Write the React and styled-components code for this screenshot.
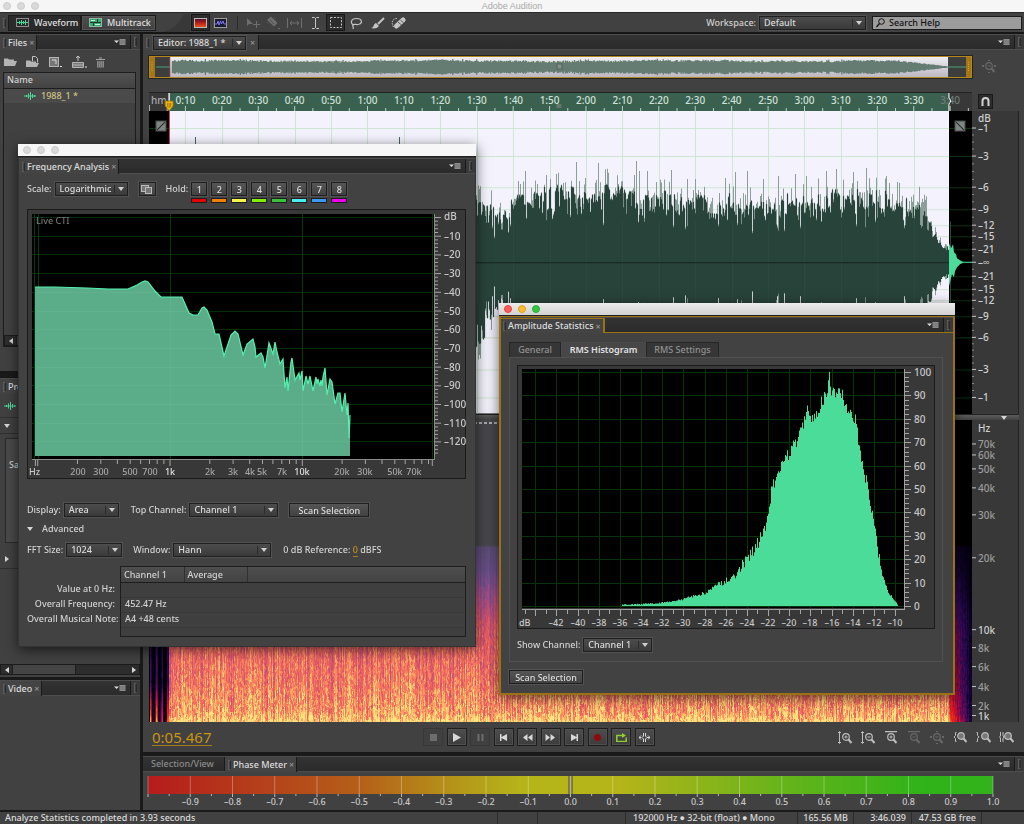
import React, { useEffect, useRef } from 'react';
import styled, { createGlobalStyle, css } from 'styled-components';

const GlobalStyle = createGlobalStyle`
  * {
    box-sizing: border-box;
  }

  body {
    margin: 0;
    background: #1a1a1a;
    color: #d2d2d2;
    font-family: 'Noto Sans', 'Open Sans', sans-serif;
    font-size: 9px;
    font-weight: 500;
    line-height: 12px;
    cursor: default;
  }

  button, input, select {
    font: inherit;
    color: inherit;
    margin: 0;
    padding: 0;
  }

  svg {
    display: block;
  }
`;

/* ---------- shell ---------- */

const Desktop = styled.div`
  position: relative;
  min-height: 100vh;
  display: flex;
  flex-direction: column;
  overflow: hidden;
`;

const TitleBar = styled.header`
  flex: none;
  height: 12px;
  display: flex;
  align-items: center;
  justify-content: center;
  position: relative;
  background: #f6f6f6;
  color: #a9a9a9;
  font-family: 'Liberation Sans', sans-serif;
  font-weight: 400;
`;

const Lights = styled.div`
  position: absolute;
  left: ${(p) => p.$left || 4}px;
  top: 50%;
  margin-top: -4px;
  display: flex;
  gap: 6px;
`;

const Light = styled.span`
  width: 8px;
  height: 8px;
  border-radius: 50%;
  background: ${(p) => p.$color || '#dadada'};
  border: 1px solid ${(p) => p.$edge || '#cdcdcd'};
`;

const Toolbar = styled.nav`
  flex: none;
  height: 22px;
  display: flex;
  align-items: center;
  border-top: 1px solid #2b2b2b;
  border-bottom: 2px solid #161616;
  background: #414141;
`;

const ModeButton = styled.button`
  height: 16px;
  width: ${(p) => p.$width}px;
  padding-left: 7px;
  display: flex;
  align-items: center;
  gap: 5px;
  border: 1px solid #1c1c1c;
  background: ${(p) => (p.$active ? '#2a2a2a' : 'linear-gradient(#4e4e4e, #404040)')};
  box-shadow: 0 0 0 1px ${(p) => (p.$active ? 'transparent' : '#555')} inset;
  color: #e0e0e0;
`;

const Slant = styled.svg`
  margin: 0 1px 0 8px;
`;

const ToolButton = styled.button`
  width: ${(p) => p.$width || 19}px;
  height: 17px;
  display: flex;
  align-items: center;
  justify-content: center;
  border: 1px solid ${(p) => (p.$pressed ? '#181818' : 'transparent')};
  background: ${(p) => (p.$pressed ? '#2c2c2c' : 'none')};
  color: ${(p) => (p.$dim ? '#6e6e6e' : '#c4c4c4')};
`;

const Divider = styled.span`
  width: 1px;
  height: 14px;
  margin: 0 5px 0 6px;
  background: #2a2a2a;
`;

const Spacer = styled.span`
  flex: 1;
`;

const SearchBox = styled.label`
  display: flex;
  align-items: center;
  gap: 4px;
  width: 150px;
  height: 14px;
  margin: 0 2px 0 6px;
  padding-left: 3px;
  border: 1px solid #1d1d1d;
  background: #9c9c9c;
  color: #111;
`;

const SearchInput = styled.input`
  flex: 1;
  min-width: 0;
  height: 12px;
  border: 0;
  background: none;
  outline: none;

  &::placeholder {
    color: #111;
    opacity: 1;
  }
`;

const Workbench = styled.main`
  flex: 1;
  display: grid;
  grid-template-columns: 140px 1fr;
  gap: 3px;
`;

const Column = styled.div`
  display: flex;
  flex-direction: column;
  min-width: 0;
  gap: ${(p) => p.$gap}px;
`;

const Panel = styled.section`
  display: flex;
  flex-direction: column;
  min-width: 0;
  flex: ${(p) => (p.$height ? 'none' : 1)};
  height: ${(p) => (p.$height ? `${p.$height}px` : 'auto')};
  margin-top: ${(p) => p.$pull || 0}px;
  background: #414141;
  overflow: hidden;
`;

const Header = styled.div`
  flex: none;
  height: 16px;
  display: flex;
  align-items: stretch;
  background: linear-gradient(#333, #2b2b2b);
  border-top: 1px solid #4c4c4c;
  border-bottom: 1px solid ${(p) => (p.$focus ? '#9a7115' : '#4d4d4d')};
`;

const Tab = styled.div`
  display: flex;
  align-items: center;
  gap: 2px;
  padding: 0 2px 0 ${(p) => (p.$idle ? 8 : 3)}px;
  width: ${(p) => (p.$width ? `${p.$width}px` : 'auto')};
  white-space: nowrap;
  color: ${(p) => (p.$idle ? '#8c8c8c' : '#dcdcdc')};
  background: ${(p) => (p.$idle ? 'none' : '#444')};
  border-right: 1px solid #1a1a1a;
  margin-bottom: ${(p) => (p.$idle ? 0 : -1)}px;

  ${(p) =>
    p.$focus &&
    css`
      padding-left: 2px;
      border-right: 2px solid #9a7115;
      border-top: 1px solid #9a7115;
    `}
`;

const Grip = styled.span`
  width: 3px;
  height: 10px;
  border: 1px solid #5c5c5c;
  border-right-color: #2a2a2a;
`;

const EndGrip = styled.span`
  width: 10px;
  display: flex;
  align-items: center;
  justify-content: center;
  border-left: 1px solid #1a1a1a;
  background: #3a3a3a;
`;

const Close = styled.button`
  border: 0;
  background: none;
  color: #9a9a9a;
  line-height: 9px;
`;

const MenuButton = styled.button`
  border: 0;
  background: none;
  margin-right: 4px;
  display: flex;
  align-items: center;
`;

const MenuIcon = () => (
  <svg width="12" height="8" viewBox="0 0 12 8">
    <path d="M0 2.500h5L2.500 5z" fill="#ddd" />
    <rect x="5.500" y="1" width="6" height="6" fill="#8b8b8b" />
    <path d="M6 3h5M6 5h5" stroke="#666" strokeWidth=".6" />
  </svg>
);

const PanelMenu = () => (
  <>
    <MenuButton aria-label="Panel menu">
      <MenuIcon />
    </MenuButton>
    <EndGrip>
      <Grip />
    </EndGrip>
  </>
);

/* ---------- controls ---------- */

const SelectWrap = styled.span`
  position: relative;
  display: inline-flex;
  width: ${(p) => p.$width}px;
  height: 14px;
  border: 1px solid #1f1f1f;
  background: linear-gradient(#4c4c4c, #3a3a3a);
  box-shadow: 0 0 0 1px #525252;
`;

const NativeSelect = styled.select`
  appearance: none;
  width: 100%;
  border: 0;
  outline: none;
  padding-left: 4px;
  line-height: 12px;
  background: none;
  color: #dcdcdc;

  option {
    background: #3a3a3a;
  }
`;

const Caret = styled.svg`
  position: absolute;
  right: 0;
  top: 0;
  pointer-events: none;
`;

const Select = ({ id, width, options, label }) => (
  <SelectWrap $width={width}>
    <NativeSelect id={id} aria-label={label} defaultValue={options[0]}>
      {options.map((o) => (
        <option key={o}>{o}</option>
      ))}
    </NativeSelect>
    <Caret width="13" height="12" viewBox="0 0 13 12">
      <path d="M.5 2v8" stroke="#2a2a2a" />
      <path d="M4 4h6L7 8z" fill="#d0d0d0" />
    </Caret>
  </SelectWrap>
);

const PushButton = styled.button`
  width: ${(p) => p.$width}px;
  height: 14px;
  line-height: 11px;
  margin-left: ${(p) => p.$left || 0}px;
  border: 1px solid #1f1f1f;
  background: linear-gradient(#555, #424242);
  box-shadow: 0 0 0 1px #525252;
  color: #dcdcdc;
`;

const CopyButton = styled(PushButton)`
  display: flex;
  align-items: center;
  justify-content: center;
`;

const Row = styled.div`
  display: flex;
  align-items: center;
  gap: ${(p) => p.$gap || 3}px;
  margin-top: ${(p) => p.$top || 0}px;
`;

const Label = styled.label`
  white-space: nowrap;
  margin-left: ${(p) => p.$left || 0}px;
`;

/* ---------- left column ---------- */

const FileTools = styled.div`
  display: flex;
  align-items: center;
  gap: 9px;
  height: 22px;
  padding: 2px 4px 0;
`;

const FileIconButton = styled.button`
  border: 0;
  background: none;
`;

const FileList = styled.div`
  flex: 1;
  margin: 0 4px 24px 3px;
  display: flex;
  flex-direction: column;
  border: 1px solid #1d1d1d;
`;

const FileTable = styled.table`
  width: 100%;
  border-collapse: collapse;
  text-align: left;

  th {
    height: 15px;
    padding: 0 3px;
    font-weight: 500;
    background: linear-gradient(#525252, #434343);
    border-bottom: 1px solid #1d1d1d;
  }

  td {
    height: 15px;
    padding: 0 0 0 20px;
    background: #4a4a4a;
    color: #d3c283;
  }
`;

const FileName = styled.span`
  display: flex;
  align-items: center;
  gap: 5px;
`;

const ScrollTrack = styled.div`
  display: flex;
  align-items: center;
  justify-content: space-between;
  height: 11px;
  margin: ${(p) => p.$margin || '0'};
  background: #2d2d2d;
  border: 1px solid #1c1c1c;
`;

const ScrollThumb = styled.span`
  flex: none;
  width: 64px;
  height: 9px;
  margin-right: auto;
  background: #454545;
  border: 1px solid #1e1e1e;
  border-width: 0 1px;
`;

const ScrollArrow = styled.button`
  width: 11px;
  border: 0;
  background: none;
  display: flex;
  justify-content: center;
`;

const Arrow = ({ dir }) => (
  <svg width="6" height="6" viewBox="0 0 6 6">
    <path
      d={{ left: 'M5 0v6L1 3z', right: 'M1 0v6l4-3z', down: 'M0 1h6L3 5z' }[dir]}
      fill="#d6d6d6"
    />
  </svg>
);

const Scrollbar = ({ margin }) => (
  <ScrollTrack $margin={margin}>
    <ScrollArrow aria-label="Scroll left">
      <Arrow dir="left" />
    </ScrollArrow>
    <ScrollThumb />
    <ScrollArrow aria-label="Scroll right">
      <Arrow dir="right" />
    </ScrollArrow>
  </ScrollTrack>
);

const PropertyBar = styled.div`
  display: flex;
  align-items: center;
  height: ${(p) => p.$height}px;
  padding-left: 4px;
  border-bottom: 1px solid #303030;
`;

const PropertyBox = styled.div`
  height: 105px;
  margin: 4px 4px 6px 5px;
  padding: 20px 3px;
  border: 1px solid #2a2a2a;
  background: #4a4a4a;
`;

const WaveGlyph = () => (
  <svg width="12" height="8" viewBox="0 0 12 8">
    <path
      d="M0 4h12M2.500 3v2M4.500 1.500v5M6.500 0v8M8.500 2v4M10.500 3v2"
      stroke="#4bd795"
      fill="none"
    />
  </svg>
);

/* ---------- editor ---------- */

const EditorTab = styled.div`
  display: flex;
  align-items: center;
  gap: 4px;
  padding: 0 3px 0 3px;
  background: #444;
  border-right: 1px solid #1a1a1a;
  margin-bottom: -1px;
`;

const EditorBody = styled.div`
  flex: 1;
  display: grid;
  grid-template-columns: 1fr 47px;
  grid-template-rows: 22px 14px 19px 1fr 6px 1fr;
  padding: 6px 5px 0 6px;
`;

const Overview = styled.div`
  border: 1px solid #b4881e;
  background: #3d3d3d;
  outline: 1px solid #242424;
`;

const Cell = styled.div`
  grid-column: ${(p) => p.$col};
  grid-row: ${(p) => p.$row};
  min-width: 0;
  min-height: 0;
  background: ${(p) => p.$bg || 'none'};
  padding-left: ${(p) => p.$indent || 0}px;
  position: relative;
  display: flex;
  align-items: center;
`;

const Fill = styled.svg`
  width: 100%;
  height: 100%;
`;

const SnapButton = styled.button`
  width: 15px;
  height: 15px;
  display: flex;
  align-items: center;
  justify-content: center;
  border: 1px solid #1a1a1a;
  background: #2c2c2c;
`;

const Splitter = styled.div`
  grid-column: 1 / 3;
  grid-row: 5;
  background: linear-gradient(#5c5c5c, #424242);
  border-top: 1px solid #222;
  display: flex;
  justify-content: flex-end;
  padding-right: 12px;
`;

const SpectrumCanvas = styled.canvas`
  position: absolute;
  inset: 0;
  width: 100%;
  height: 100%;
`;

const Transport = styled.div`
  flex: none;
  height: 30px;
  display: grid;
  grid-template-columns: 280px 232px 1fr;
  align-items: center;
  padding: 0 10px 0 0;
`;

const TimeCode = styled.button`
  justify-self: start;
  margin-left: 9px;
  border: 0;
  border-bottom: 1px solid #a67c1c;
  background: none;
  color: #c99314;
  font-size: 15px;
  font-weight: 400;
  line-height: 16px;
`;

const TransportButtons = styled.div`
  display: flex;
  justify-content: space-between;
`;

const TransportButton = styled.button`
  width: 20px;
  height: 18px;
  display: flex;
  align-items: center;
  justify-content: center;
  border: 1px solid ${(p) => (p.$dim ? '#383838' : '#1e1e1e')};
  background: ${(p) => (p.$dim ? '#404040' : 'linear-gradient(#4d4d4d, #3c3c3c)')};
  box-shadow: 0 0 0 1px ${(p) => (p.$dim ? 'transparent' : '#505050')} inset;
  color: ${(p) => (p.$dim ? '#6d6d6d' : '#d8d8d8')};
`;

const ZoomButtons = styled.div`
  justify-self: end;
  display: flex;
  gap: 8px;
`;

const ZoomButton = styled.button`
  border: 0;
  background: none;
  color: ${(p) => (p.$dim ? '#686868' : '#bdbdbd')};
`;

const PhaseBody = styled.div`
  flex: 1;
  padding: 4px 31px 0 5px;
`;

const StatusBar = styled.footer`
  flex: none;
  height: 14px;
  display: flex;
  align-items: stretch;
  border-top: 2px solid #1a1a1a;
  background: #414141;
  color: #dcdcdc;
`;

const StatusText = styled.span`
  flex: 1;
  padding-left: 5px;
`;

const StatusCell = styled.span`
  width: ${(p) => p.$width}px;
  padding: 0 ${(p) => (p.$left ? 0 : 5)}px 0 ${(p) => (p.$left ? 7 : 0)}px;
  text-align: ${(p) => (p.$left ? 'left' : 'right')};
  white-space: nowrap;
  border-left: 1px solid #2c2c2c;
`;

/* ---------- floating windows ---------- */

const FloatingWindow = styled.section`
  position: absolute;
  left: ${(p) => p.$left}px;
  top: ${(p) => p.$top}px;
  width: ${(p) => p.$width}px;
  background: #424242;
  box-shadow: 0 3px 12px rgba(0, 0, 0, 0.6);
`;

const WindowBar = styled.div`
  position: relative;
  height: 13px;
  background: ${(p) => (p.$active ? 'linear-gradient(#ececec, #d2d2d2)' : '#f7f7f7')};
  border-bottom: 1px solid #222;
`;

const WindowFrame = styled.div`
  border: ${(p) => (p.$focus ? '1px solid #9a7115' : '1px solid #333')};
  border-width: ${(p) => (p.$focus ? '1px 2px 2px' : '1px')};
`;

const FrequencyBody = styled.div`
  padding: 8px 9px 9px 8px;
`;

const HoldRow = styled(Row)`
  height: 21px;
  align-items: flex-start;
  line-height: 14px;
`;

const HoldGroup = styled.div`
  display: flex;
  gap: 4px;
`;

const Hold = styled.div`
  display: flex;
  flex-direction: column;
  gap: 2px;
`;

const HoldColor = styled.span`
  height: 5px;
  border: 1px solid #1e1e1e;
  background: ${(p) => p.$color};
`;

const ChartFrame = styled.div`
  margin-top: ${(p) => p.$top}px;
  border: 1px solid #1b1b1b;
  background: #383838;
`;

const Disclosure = styled.button`
  display: flex;
  align-items: center;
  gap: 9px;
  margin-top: 6px;
  border: 0;
  background: none;
`;

const Accent = styled.a`
  color: #c99314;
  text-decoration: none;
  border-bottom: 1px solid #a67c1c;
`;

const Results = styled.div`
  display: grid;
  grid-template-columns: 88px 1fr;
  gap: 5px;
  margin-top: 9px;
`;

const ResultLabels = styled.div`
  padding-top: 15px;
  text-align: right;
  line-height: 15px;
  white-space: nowrap;
`;

const ResultBox = styled.div`
  height: 71px;
  border: 1px solid #1d1d1d;
  background: #3f3f3f;
`;

const ResultTable = styled.table`
  width: 100%;
  border-collapse: collapse;
  table-layout: fixed;
  text-align: left;
  line-height: 11px;

  th {
    height: 15px;
    padding: 0 0 0 3px;
    font-weight: 500;
    background: linear-gradient(#4e4e4e, #434343);
    border-bottom: 1px solid #1d1d1d;
  }

  th + th {
    border-left: 1px solid #303030;
  }

  td {
    height: 15px;
    padding: 0 0 2px 4px;
    border-bottom: 1px solid #383838;
  }
`;

const Col = styled.col`
  width: ${(p) => p.$width}px;
`;

const StatsBody = styled.div`
  padding: 9px 10px 9px 8px;
`;

const StatsTabs = styled.div`
  display: flex;
`;

const StatsTab = styled.button`
  height: 15px;
  width: ${(p) => p.$width}px;
  border: 1px solid ${(p) => (p.$active ? '#4a4a4a' : '#262626')};
  border-bottom: 0;
  background: ${(p) => (p.$active ? '#474747' : '#363636')};
  color: ${(p) => (p.$active ? '#e2e2e2' : '#929292')};
  font-weight: ${(p) => (p.$active ? 600 : 500)};
`;

const StatsPane = styled.div`
  border: 1px solid #505050;
  padding: 7px 7px 9px;
  height: 305px;
  margin-bottom: 8px;
`;

/* ---------- data ---------- */

const noise = (seed) => {
  let s = seed;
  return () => {
    s = (s * 1664525 + 1013904223) % 4294967296;
    return s / 4294967296;
  };
};

const lerp = (pts, x) => {
  for (let i = 1; i < pts.length; i += 1) {
    if (x <= pts[i][0]) {
      const [x0, y0] = pts[i - 1];
      const [x1, y1] = pts[i];
      return y0 + ((x - x0) / (x1 - x0)) * (y1 - y0);
    }
  }
  return pts[pts.length - 1][1];
};

const DURATION = 226;
const SEL_START = 2.45;
const SEL_END = 97.2;

/* x and half height of the tall peaks and the deep gaps of the track */
const PEAKS = {
  376: 91, 397: 87, 407: 88, 427: 100, 449: 99, 487: 101, 490: 91, 498: 91,
  522: 92, 538: 83, 546: 83, 576: 84, 586: 90, 598: 91, 614: 83, 629: 86, 646: 88, 657: 86,
  677: 91, 687: 93, 704: 90, 717: 94, 737: 86, 748: 80, 777: 66,
};
const GAPS = {
  343: 34, 345: 24, 349: 38, 361: 36, 397: 42, 421: 45, 454: 37, 524: 35, 536: 33, 538: 36,
  569: 36, 588: 37, 603: 29, 628: 34, 635: 31, 651: 34, 667: 42, 707: 36, 726: 40, 755: 34,
};

const trackPaths = () => {
  const r = noise(77);
  const body = [];
  const tips = [];
  let run = 0;
  for (let x = 20; x < 800; x += 1) {
    const fade = x > 764 ? 1 - ((x - 764) / 36) * 0.76 : 1;
    const base = lerp(
      [[20, 56], [325, 62], [345, 42], [370, 56], [400, 62], [460, 64], [520, 60], [560, 56], [620, 54], [700, 62], [764, 54], [800, 50]],
      x
    );
    if (r() > 0.55) run = (r() - 0.5) * 22;
    let h = base + run + (r() - 0.5) * 8 - (r() > 0.9 ? 14 : 0);
    let tip = h + (r() > 0.5 ? r() * 20 : 1);
    if (GAPS[x]) {
      h = GAPS[x];
      tip = h + 2;
    }
    if (PEAKS[x]) tip = PEAKS[x];
    h *= fade;
    tip *= x > 777 ? fade : 1;
    const low = x < 336 ? 1.35 : 1;
    body.push(`M${x}.5 ${(151 - h).toFixed(1)}V${(151 + h * low).toFixed(1)}`);
    tips.push(`M${x}.5 ${(151 - tip).toFixed(1)}V${(151 + tip * low * 0.94).toFixed(1)}`);
  }
  return { body: body.join(''), tips: tips.join('') };
};

const overviewPath = () => {
  const r = noise(5);
  let d = '';
  for (let x = 22; x < 800; x += 1) {
    const fade = x > 745 ? 1 - (x - 745) / 60 : 1;
    const swell = 0.8 + Math.sin(x / 37) * 0.5 + Math.sin(x / 11) * 0.3;
    const h = (4.2 + swell + r() * 1.8 + (r() > 0.92 ? 1 : 0)) * fade;
    d += `M${x}.5 ${(10 - h).toFixed(1)}V${(10 + h).toFixed(1)}`;
  }
  return d;
};

const TRACK = trackPaths();
const OVERVIEW = overviewPath();

const DB_LINES = [
  ['–1', 17], ['–3', 45], ['–6', 76], ['–9', 98], ['–12', 114], ['–15', 125], ['–21', 138], ['–∞', 151],
  ['–21', 165], ['–15', 178], ['–12', 189], ['–9', 205], ['–6', 226], ['–3', 258], ['–1', 286],
];

const HZ_LINES = [
  ['Hz', 8, true], ['70k', 24], ['60k', 35], ['50k', 49], ['40k', 68], ['30k', 95], ['20k', 138],
  ['10k', 210, true], ['8k', 228], ['6k', 247], ['4k', 267], ['2k', 286], ['1k', 296, true],
];

const HOLDS = ['#e60000', '#f08000', '#f6f64a', '#80f000', '#38c438', '#48eef0', '#3a98f4', '#ee00ee'];

/* ---------- icons ---------- */

const icon = (w, h, children) => (
  <svg width={w} height={h} viewBox={`0 0 ${w} ${h}`} fill="none" stroke="currentColor">
    {children}
  </svg>
);

const WaveModeIcon = () =>
  icon(13, 9, <>
    <rect x=".5" y=".5" width="12" height="8" stroke="#8d8d8d" />
    <path d="M1 4.500h11M3.500 3v3M5.500 2v5M7.500 3v3M9.500 2v5" stroke="#4bd795" />
  </>);

const MultiModeIcon = () =>
  icon(13, 9, <>
    <rect x=".5" y=".5" width="12" height="8" stroke="#8fb8a3" fill="#38ab73" />
    <path d="M1 4.500h11M8.500 1v3M4.500 5v3" stroke="#23382e" />
    <path d="M2 2.500h4M6 6.500h5" stroke="#c9f2dd" />
  </>);

const SpectralIcon = () =>
  icon(13, 10, <>
    <defs>
      <linearGradient id="spectral" x1="0" y1="0" x2="0" y2="1">
        <stop offset="0" stopColor="#4a0b2c" />
        <stop offset=".5" stopColor="#b8201a" />
        <stop offset="1" stopColor="#ee5a1e" />
      </linearGradient>
    </defs>
    <rect x=".5" y=".5" width="12" height="9" stroke="#b9b9b9" fill="url(#spectral)" />
  </>);

const PitchIcon = () =>
  icon(13, 10, <>
    <rect x=".5" y=".5" width="12" height="9" stroke="#9b9b9b" fill="#1b1b30" />
    <path d="M1 6h2l1-3 1 4 1.500-4 1 3 1.500-3 1 3h2" stroke="#7d78f0" />
  </>);

const MoveIcon = () => icon(14, 12, <><path d="M1 1v8l2-2h4z" fill="currentColor" stroke="none" /><path d="M10.500 4v7M7 7.500h7" /></>);
const RazorIcon = () => icon(14, 13, <><path d="M1 4l4-3.500L11.500 7 8 10.500z" fill="currentColor" stroke="none" /><path d="M1 6l2 2M8 1l2 2M4 4l4 4" stroke="#505050" /><path d="M12 12.500h2" /></>);
const SlipIcon = () => icon(15, 10, <path d="M.5 0v10M14.500 0v10M3 5h9M5 3L3 5l2 2M10 3l2 2-2 2" />);
const BeamIcon = () => icon(7, 12, <path d="M0 .5h2.500l1 1 1-1H7M3.500 1v10M0 11.500h2.500l1-1 1 1H7" />);
const MarqueeIcon = () => icon(12, 11, <rect x=".5" y=".5" width="11" height="10" strokeDasharray="2 1.400" />);
const LassoIcon = () => icon(13, 12, <path d="M4 8C0 7 .5 1.500 6.500 1.500S13 6.500 8 7.500C6 8 4 6.500 3 8s1 1.500 0 4" strokeWidth="1.200" />);
const BrushIcon = () => icon(14, 12, <><path d="M13 1L7 7" strokeWidth="2" /><path d="M0 11c3 0 2-4 5-5l3 3c-2 2.500-5 3-8 2z" fill="currentColor" stroke="none" /></>);
const HealIcon = () => icon(16, 12, <><path d="M5.500 9L12 3" strokeWidth="5" strokeLinecap="round" /><path d="M2.500 10C-.5 5 2 1.500 6 1.500" strokeDasharray="1.500 1" /><path d="M7 5l3.500 3M9.500 3l3 3" stroke="#5c5c5c" /></>);

const FolderIcon = () => icon(13, 10, <path d="M0 9V1.500h4l1 1h5V4h3l-2 5z" fill="#b4b4b4" stroke="none" />);
const ImportIcon = () => icon(14, 12, <><path d="M0 11V4.500h4l1 1h5V7h3l-2 4z" fill="#b4b4b4" stroke="none" /><path d="M6.500 5V.5h3l2 2v4" stroke="#c4c4c4" /></>);
const NewFileIcon = () => icon(14, 12, <><rect x=".5" y="1.500" width="9" height="9" fill="#777" stroke="#b4b4b4" /><path d="M3 4h4v4" stroke="#ddd" /><path d="M11 10.500h2" stroke="#ddd" /></>);
const InsertIcon = () => icon(15, 12, <><path d="M.5 6.500h11v5H.5zM1 9h10" fill="#777" stroke="#b4b4b4" /><path d="M6 5V0M4 2l2-2 2 2" stroke="#c8c8c8" /><path d="M13 11h2" stroke="#ddd" /></>);
const TrashIcon = () => icon(9, 11, <><path d="M1 4h7v6.500H1z" fill="#8a8a8a" stroke="none" /><path d="M0 2.500h9M3 1h3" stroke="#a4a4a4" /><path d="M2.500 4v6M4.500 4v6M6.500 4v6" stroke="#6a6a6a" /></>);

const SearchIcon = () => icon(9, 10, <><circle cx="5.500" cy="3.500" r="2.800" /><path d="M3.500 5.500L.5 9" strokeWidth="1.200" /></>);
const MagnetIcon = () => icon(9, 9, <path d="M1.500 9V4a3 3 0 016 0v5" strokeWidth="2" />);
const CopyIcon = () =>
  icon(12, 9, <>
    <rect x=".5" y=".5" width="7" height="6" fill="#777" stroke="#bbb" />
    <rect x="4.500" y="2.500" width="6" height="6" fill="#777" stroke="#bbb" />
  </>);

const Lens = ({ x, y, sign }) => (
  <>
    <circle cx={x} cy={y} r="3.300" strokeWidth="1.200" fill={sign ? 'none' : '#777'} />
    <path d={`M${x + 2.5} ${y + 2.5}l3 3.500`} strokeWidth="2" />
    {sign && <path d={`M${x - 1.5} ${y}h3${sign === '+' ? `M${x} ${y - 1.5}v3` : ''}`} />}
  </>
);

const ZOOMS = [
  ['Zoom in amplitude', <><path d="M1.500 1v11M0 2l1.500-1.500L3 2M0 11l1.500 1.500L3 11" /><Lens x={8} y={6} sign="+" /></>],
  ['Zoom out amplitude', <><path d="M1.500 1v11M0 2l1.500-1.500L3 2M0 11l1.500 1.500L3 11" /><Lens x={8} y={6} sign="-" /></>],
  ['Zoom in time', <><path d="M1 .5h12" strokeWidth="1.500" /><Lens x={7} y={6} sign="+" /></>],
  ['Zoom out time', <><path d="M1 .5h12" strokeWidth="1.500" /><Lens x={7} y={6} sign="-" /></>, true],
  ['Zoom out full', <><path d="M0 6h2M12 6h2M7 0v1M7 12v1" strokeWidth="2" /><Lens x={7} y={6} sign="-" /></>, true],
  ['Zoom in at in point', <><path d="M3.500 1.500h-1v3L1 6l1.500 1.500v3h1" /><Lens x={8} y={5} /></>],
  ['Zoom in at out point', <><path d="M.5 1.500h1v3L3 6 1.500 7.500v3h-1" /><Lens x={9} y={5} /></>],
  ['Zoom to selection', <><path d="M1.500 1v4L.5 6l1 1v4M4 1v4l1 1-1 1v4" /><Lens x={9} y={5} /></>],
];

const TRANSPORT = [
  ['Stop', <path d="M2 1h7v7H2z" fill="currentColor" stroke="none" />, true],
  ['Play', <path d="M2 0l8 4.500L2 9z" fill="currentColor" stroke="none" />],
  ['Pause', <path d="M3.500 1v7M7.500 1v7" strokeWidth="2" />, true],
  ['Go to start', <path d="M2 1h1.500v3L9 1v7L3.500 5v3H2z" fill="currentColor" stroke="none" />],
  ['Rewind', <path d="M5.500 1v7L1 4.500zM10.500 1v7L6 4.500z" fill="currentColor" stroke="none" />],
  ['Fast forward', <path d="M.5 1v7L5 4.500zM5.500 1v7L10 4.500z" fill="currentColor" stroke="none" />],
  ['Go to end', <path d="M9 1H7.500v3L2 1v7l5.500-3v3H9z" fill="currentColor" stroke="none" />],
  ['Record', <circle cx="5.500" cy="4.500" r="3.500" fill="#8e0b0b" stroke="none" />],
  ['Loop', <><path d="M3 2.500H.8v6h9.400v-4M3 2.500h4" stroke="#8fcf2c" strokeWidth="1.500" /><path d="M6 0l4 2.500L6 5z" fill="#8fcf2c" stroke="none" /></>],
  ['Skip selection', <path d="M4.500 0v3L3 4.500 4.500 6v3M6.500 0v3L8 4.500 6.500 6v3M0 4.500h2M8 4.500h3M2 2.500L0 4.500l2 2M9 2.500l2 2-2 2" />],
];

/* ---------- spectrogram ---------- */

const PALETTE = [
  [0, 0, 0], [14, 4, 40], [50, 10, 90], [130, 10, 80], [205, 15, 40], [235, 50, 25], [250, 130, 30], [255, 220, 70],
];

const shade = (v) => {
  const t = Math.max(0, Math.min(0.999, v)) * (PALETTE.length - 1);
  const i = Math.floor(t);
  const f = t - i;
  return PALETTE[i].map((c, k) => c + (PALETTE[i + 1][k] - c) * f);
};

const SPECTRUM = [
  [0, 0], [125, 0], [127, 0.2], [150, 0.28], [175, 0.42], [205, 0.6], [235, 0.68], [265, 0.74], [294, 0.84], [303, 0.98],
];

const Spectrogram = () => {
  const ref = useRef(null);

  useEffect(() => {
    const ctx = ref.current.getContext('2d');
    const { width, height } = ref.current;
    const img = ctx.createImageData(width, height);
    const r = noise(41);
    const selFrom = 20;
    const selTo = 800;
    for (let x = 0; x < width; x += 1) {
      const streak = (r() - 0.5) * 0.24 + Math.sin(x / 5) * 0.03;
      const selected = x >= selFrom && x < selTo;
      let speck = 0;
      for (let y = 0; y < height; y += 1) {
        if (r() > 0.55) speck = (r() - 0.5) * 0.38;
        const level = lerp(SPECTRUM, y);
        let v = level ? level + (streak + speck * level) * Math.min(1, level * 1.4) : 0;
        if (x < selFrom) {
          const band = Math.max(0, Math.sin(x * 1.1)) * 0.5 + streak;
          v = level * (band * 0.8 + speck * 0.3) + (y > 262 ? ((y - 262) / 60) * (band + 0.2) : 0);
        }
        if (x >= selTo) v = level * (0.85 - (x - selTo) / 32) + speck * 0.4 * level + streak * level * 0.6;
        const c = shade(v);
        const dashTop = selected && y > 1 && y < 4 && x % 5 < 3;
        const dashSide = x === selTo - 1 && y % 5 < 3;
        const o = (y * width + x) * 4;
        for (let k = 0; k < 3; k += 1) {
          img.data[o + k] = selected ? c[k] * 0.72 + [72, 72, 76][k] : c[k];
          if (dashTop || dashSide) img.data[o + k] = 170;
        }
        img.data[o + 3] = 255;
      }
    }
    ctx.putImageData(img, 0, 0);
  }, []);

  return <SpectrumCanvas ref={ref} width="823" height="303" />;
};

/* ---------- editor drawings ---------- */

const OverviewWave = () => (
  <Fill viewBox="0 0 823 20" preserveAspectRatio="none">
    <defs>
      <linearGradient id="ov" x1="0" y1="0" x2="0" y2="1">
        <stop offset="0" stopColor="#f0eef4" />
        <stop offset="1" stopColor="#bcb8c2" />
      </linearGradient>
    </defs>
    <rect x="20" width="780" height="20" fill="url(#ov)" />
    <path d="M6 10h14M800 10h18" stroke="#4ba57d" />
    <path d={OVERVIEW} stroke="#657c73" strokeWidth="1.300" />
    <rect width="5" height="20" fill="#a47714" />
    <rect x="818" width="5" height="20" fill="#a47714" />
    <path d="M2 5v10M820.500 5v10" stroke="#caa046" strokeDasharray="1 1" />
    <rect x="408" y="7" width="5" height="5" fill="#82908a" stroke="#53645d" />
    <path d="M20 0v20" stroke="#b33c3c" strokeWidth=".6" />
  </Fill>
);

const pct = (v) => `${v}%`;

const TimeRuler = () => {
  const ticks = [];
  for (let t = 5; t <= 225; t += 5) ticks.push(t);
  return (
    <Fill fill="#cfe0d8" fontSize="10">
      <rect width="100%" height="19" fill="#383838" />
      <rect x={pct(SEL_START)} width={pct(SEL_END - SEL_START)} height="19" fill="#3a6150" />
      <path d="M.5 13v6" stroke="#aaa" />
      <text x="2" y="12" fill="#aaa">hm</text>
      {ticks.map((t) => {
        const x = pct((t / DURATION) * 100);
        const major = t % 10 === 0;
        return (
          <React.Fragment key={t}>
            <line x1={x} x2={x} y1={major ? 14 : 16} y2="19" stroke="#b9cfc4" />
            {major && (
              <text x={x} y="12" textAnchor="middle" fill={t === 220 ? '#6e7d76' : undefined}>
                {`${Math.floor(t / 60)}:${String(t % 60).padStart(2, '0')}`}
              </text>
            )}
          </React.Fragment>
        );
      })}
      <rect x="49.500%" y="12" width="5" height="4" fill="#65766e" />
      <svg x={pct(SEL_START)} overflow="visible">
        <path d="M0 0v9" stroke="#eee" strokeWidth="1.500" />
        <path d="M-4 9h8v5L0 19l-4-5z" fill="#f0b512" stroke="#8b6508" strokeWidth=".7" />
        <path d="M-1.500 11v4M0 11v5M1.500 11v4" stroke="#8b6508" strokeWidth=".7" />
      </svg>
      <svg x={pct(SEL_END)} overflow="visible">
        <path d="M0 0v6l2 3-2 3v7" stroke="#fff" fill="none" />
      </svg>
      <path d="M0 .5h2000" stroke="#232323" />
    </Fill>
  );
};

const TrackWave = () => {
  const grid = [];
  for (let t = 10; t < 226; t += 10) grid.push(((t / DURATION) * 823).toFixed(0));
  return (
    <Fill viewBox="0 0 823 302" preserveAspectRatio="none">
      <rect width="823" height="302" fill="#000" />
      <rect x="20" width="780" height="302" fill="#f4f3fd" />
      {grid.map((x) => (
        <path key={x} d={`M${x}.5 0v302`} stroke={x < 800 ? '#cfe6d2' : 'none'} />
      ))}
      {DB_LINES.map(([l, y]) => (
        <g key={y}>
          <path d={`M20 ${y}.5h780`} stroke="#cfe6d2" />
          <path d={`M0 ${y}.5h20M800 ${y}.5h23`} stroke="#0b3210" />
        </g>
      ))}
      <path d={TRACK.tips} stroke="#8b9e97" />
      <path d="M46.500 26v80M250.500 26v80" stroke="#48665a" />
      <path d={TRACK.body} stroke="#28433a" strokeWidth="1.200" />
      {grid.map((x) => (
        <path key={x} d={`M${x}.5 110v84`} stroke="#2b4a3c" />
      ))}
      <path d="M20 151.500h780" stroke="#14251f" />
      <path d="M800 132l2 5 2-4 1 8 2 2 1 4 3 2 3 1.500h9v1h-9l-3 1.500-3 3-2 4-1 6-2-3-2 8-1 4z" fill="#4bdc99" />
      <path d="M20.500 0v302" stroke="#d43f4c" />
      <g>
        <rect x="7" y="10" width="10" height="10" fill="#7d8681" stroke="#4c4c4c" />
        <path d="M8 19l8-8" stroke="#222" />
        <rect x="806" y="10" width="10" height="10" fill="#7d8681" stroke="#4c4c4c" />
        <path d="M807 11l8 8" stroke="#222" />
      </g>
    </Fill>
  );
};

const SideScale = ({ lines, height, unit }) => {
  const minor = [];
  for (let i = 1; i < lines.length; i += 1) {
    const gap = lines[i][1] - lines[i - 1][1];
    const n = Math.max(1, Math.round(gap / 7));
    for (let k = 1; k < n; k += 1) minor.push(lines[i - 1][1] + (gap * k) / n);
  }
  return (
    <Fill fontSize="10">
      <rect width="100%" height="100%" fill="#383838" />
      {unit && <text x="6" y="11" fill="#cfcfcf">{unit}</text>}
      {unit && minor.map((y) => (
        <line key={y} x1="0" x2="2" y1={pct((y / height) * 100)} y2={pct((y / height) * 100)} stroke="#8b8b8b" />
      ))}
      {lines.map(([label, y, strong]) => (
        <React.Fragment key={y}>
          {label !== 'Hz' && (
            <line x1="0" x2="4" y1={pct((y / height) * 100)} y2={pct((y / height) * 100)} stroke="#c4c4c4" />
          )}
          <text x="6" y={pct((y / height) * 100)} dy="4" fill={unit || strong ? '#d0d0d0' : '#9d9d9d'}>
            {label}
          </text>
        </React.Fragment>
      ))}
      <path d="M46.500 0v2000" stroke="#222" />
    </Fill>
  );
};

const PhaseScale = () => {
  const marks = [];
  for (let i = 0; i <= 40; i += 1) marks.push(i);
  return (
    <Fill overflow="visible" fontSize="9" fill="#c9c9c9">
      <defs>
        <linearGradient id="phase">
          <stop offset="0" stopColor="#b51c1c" />
          <stop offset=".25" stopColor="#b55f19" />
          <stop offset=".38" stopColor="#b59c19" />
          <stop offset=".44" stopColor="#b5b419" />
          <stop offset=".56" stopColor="#b5b419" />
          <stop offset=".75" stopColor="#66b41a" />
          <stop offset=".92" stopColor="#2fb319" />
          <stop offset="1" stopColor="#33b31b" />
        </linearGradient>
      </defs>
      <rect width="100%" height="18" fill="url(#phase)" />
      {marks.map((i) => {
        const x = pct(i * 2.5);
        const major = i % 2 === 0;
        return (
          <React.Fragment key={i}>
            {major && <line x1={x} x2={x} y1="0" y2="18" stroke="#fff" strokeOpacity=".3" />}
            <line x1={x} x2={x} y1="18" y2={major ? 21 : 20} stroke="#b8b8b8" />
            {major && i > 0 && (
              <text x={x} y="29" textAnchor="middle">
                {((i - 20) / 20).toFixed(1).replace('-', '–')}
              </text>
            )}
          </React.Fragment>
        );
      })}
      <svg x="50%" overflow="visible">
        <path d="M0 0v18" stroke="#4a4a1c" strokeWidth="4" />
        <path d="M0 0v18" stroke="#b5b2a8" strokeWidth="2" />
      </svg>
    </Fill>
  );
};

/* ---------- charts in the windows ---------- */

const CURVE =
  '7,77 27,77 59,78 80,79 100,79 109,75 114,72 117,71 120,72 127,81 133,87 154,87 161,103 165,105 170,105 174,98 176,97 179,100 184,112 187,124 191,124 196,146 203,125 207,121 210,124 215,145 219,134 225,129 227,137 228,147 233,143 235,147 237,158 241,133 245,144 247,132 249,142 252,154 255,149 257,178 259,167 260,181 263,152 264,148 267,170 271,163 272,170 274,161 275,181 278,166 280,174 282,166 285,181 288,167 289,174 290,169 292,176 293,170 294,176 295,167 297,158 299,185 302,169 304,172 307,194 310,183 312,183 314,202 317,183 319,205 320,193 321,228 322,205';

const logX = (f) => 142 + Math.log10(f / 1000) * 132.3;

const FrequencyChart = () => {
  const db = [];
  for (let i = 0; i <= 63; i += 1) db.push(i);
  const freqs = [96, 100, 200, 300, 400, 500, 600, 700, 800, 900, 1000, 2000, 3000, 4000, 5000, 6000, 7000, 8000,
    9000, 10000, 20000, 30000, 40000, 50000, 60000, 70000, 80000, 90000, 96000];
  const names = [[200, '200'], [300, '300'], [500, '500'], [700, '700'], [1000, '1k'], [2000, '2k'], [3000, '3k'],
    [4000, '4k'], [5000, '5k'], [7000, '7k'], [10000, '10k'], [20000, '20k'], [30000, '30k'], [50000, '50k'], [70000, '70k']];
  return (
    <svg width="438" height="268" viewBox="0 0 438 268" fontSize="10" fill="#c9c9c9">
      <rect x="4" y="4" width="402" height="245" fill="#000" />
      {[7, 26, 44, 63, 82, 101, 119, 138, 157, 175, 194, 213, 231].map((y) => (
        <path key={y} d={`M4 ${y}.5h402`} stroke="#062f06" />
      ))}
      <path d="M6.500 4v245M10.500 4v245M142.500 4v245M274.500 4v245M404.500 4v245" stroke="#083a08" />
      <polygon points={`${CURVE} 322,246 7,246`} fill="#5aad88" />
      <path d="M142.500 87v159M274.500 165v81M7 213.500h315M7 231.500h315M7 194.500h297M7 175.500h250M7 157.500h229M7 138.500h186M7 119.500h178M7 101.500h152M7 82.500h120" stroke="#66b993" strokeOpacity=".4" />
      <polyline points={CURVE} fill="none" stroke="#53f2b0" strokeWidth="1.200" />
      <text x="8" y="14" fill="#777" fontSize="9">Live CTI</text>
      <path d="M4 249.500h403M406.500 4v245" stroke="#8b8b8b" />
      {db.map((i) => (
        <path key={i} d={`M407 ${(7.5 + i * 3.74).toFixed(1)}h${i % 5 === 0 ? 6 : 3}`} stroke="#a5a5a5" />
      ))}
      <text x="416" y="10">dB</text>
      {[10, 20, 30, 40, 50, 60, 70, 80, 90, 100, 110, 120].map((v) => (
        <text key={v} x="416" y={Math.round(7 + v * 1.87) + 4}>{`–${v}`}</text>
      ))}
      {freqs.map((f) => (
        <path key={f} d={`M${logX(f).toFixed(1)} 250v${[96, 100, 1000, 10000, 96000].includes(f) ? 6 : 4}`} stroke="#a5a5a5" />
      ))}
      <text x="1" y="265" fontSize="9">Hz</text>
      {names.map(([f, label]) => (
        <text
          key={f}
          x={Math.round(logX(f))}
          y="265"
          fontSize="9"
          textAnchor="middle"
          fill={f === 1000 || f === 10000 ? '#e2e2e2' : '#a6a6a6'}
        >
          {label}
        </text>
      ))}
    </svg>
  );
};

const histogramPath = () => {
  const r = noise(12);
  const env = [
    [104, 239], [142, 237], [162, 234], [186, 227], [206, 215], [218, 208], [228, 194], [240, 176], [250, 151],
    [253, 122], [264, 99], [277, 77], [284, 62], [286, 52], [289, 42], [292, 54], [299, 50], [303, 34], [309, 30],
    [311, 7], [313, 27], [324, 28], [330, 46], [338, 53], [340, 75], [344, 98], [348, 115], [352, 136], [356, 160],
    [360, 186], [365, 214], [372, 229], [380, 239.5],
  ];
  let d = 'M104 240';
  for (let x = 104; x < 380; x += 1) {
    const y = lerp(env, x);
    const j = y > 234 ? 1 : Math.min(9, (240 - y) / 5);
    const v = x === 311 ? 6 : Math.min(239.5, y + (r() - 0.5) * j * 1.4);
    d += `V${v.toFixed(1)}h1`;
  }
  return `${d}V240z`;
};

const HISTOGRAM = histogramPath();

const HistogramChart = () => {
  const db = [];
  for (let v = -45; v <= -10; v += 1) db.push(v);
  const x = (v) => Math.round(377 + (v + 10) * 10.58);
  const rows = [];
  for (let i = 0; i <= 100; i += 2) rows.push(i);
  const y = (v) => Math.round(240 - v * 2.34);
  return (
    <svg width="418" height="262" viewBox="0 0 418 262" fontSize="10" fill="#c9c9c9">
      <rect x="4" y="3" width="383" height="239" fill="#000" />
      {db.filter((v) => v % 2 === 0).map((v) => (
        <path key={v} d={`M${x(v)}.5 3v239`} stroke="#073507" />
      ))}
      {rows.filter((v) => v % 10 === 0).map((v) => (
        <path key={v} d={`M4 ${y(v)}.5h383`} stroke="#073507" />
      ))}
      <path d={HISTOGRAM} fill="#4bdc99" />
      <path d="M4 243.500h383M386.500 3v240" stroke="#a0a0a0" />
      {rows.map((v) => (
        <path key={v} d={`M387 ${y(v)}.5h${v % 10 === 0 ? 6 : 4}`} stroke="#a5a5a5" />
      ))}
      {rows.filter((v) => v % 10 === 0).map((v) => (
        <text key={v} x="396" y={y(v) + 4}>{v}</text>
      ))}
      {db.map((v) => (
        <path key={v} d={`M${x(v)}.5 244v${v % 2 === 0 ? 6 : 4}`} stroke="#a5a5a5" />
      ))}
      <text x="1" y="260" fontSize="9">dB</text>
      {db.filter((v) => v % 2 === 0 && v > -44).map((v) => (
        <text key={v} x={x(v)} y="260" fontSize="9" textAnchor="middle">{`–${-v}`}</text>
      ))}
    </svg>
  );
};

/* ---------- windows ---------- */

const FrequencyAnalysis = () => (
  <FloatingWindow $left={18} $top={144} $width={458}>
    <WindowBar>
      <Lights $left={5}>
        <Light />
        <Light />
        <Light />
      </Lights>
    </WindowBar>
    <WindowFrame>
      <Header>
        <Tab>
          <Grip />
          Frequency Analysis
          <Close aria-label="Close">×</Close>
        </Tab>
        <Spacer />
        <PanelMenu />
      </Header>
      <FrequencyBody>
        <HoldRow>
          <Label htmlFor="scale">Scale:</Label>
          <Select id="scale" width={73} options={['Logarithmic', 'Linear']} />
          <CopyButton $width={17} $left={8} aria-label="Copy all graph data">
            <CopyIcon />
          </CopyButton>
          <Label as="span" $left={7}>Hold:</Label>
          <HoldGroup>
            {HOLDS.map((color, i) => (
              <Hold key={color}>
                <PushButton $width={16}>{i + 1}</PushButton>
                <HoldColor $color={color} />
              </Hold>
            ))}
          </HoldGroup>
        </HoldRow>
        <ChartFrame $top={6}>
          <FrequencyChart />
        </ChartFrame>
        <Row $top={24}>
          <Label htmlFor="display">Display:</Label>
          <Select id="display" width={55} options={['Area', 'Lines', 'Bars']} />
          <Label $left={9} htmlFor="top-channel">Top Channel:</Label>
          <Select id="top-channel" width={89} options={['Channel 1', 'Average']} />
          <PushButton $width={80} $left={8}>Scan Selection</PushButton>
        </Row>
        <Disclosure>
          <Arrow dir="down" />
          Advanced
        </Disclosure>
        <Row $top={8}>
          <Label htmlFor="fft">FFT Size:</Label>
          <Select id="fft" width={56} options={['1024', '2048', '4096']} />
          <Label $left={8} htmlFor="window">Window:</Label>
          <Select id="window" width={98} options={['Hann', 'Hamming', 'Blackman']} />
          <Label as="span" $left={9}>
            0 dB Reference: <Accent href="#reference">0</Accent> dBFS
          </Label>
        </Row>
        <Results>
          <ResultLabels>
            <div>Value at 0 Hz:</div>
            <div>Overall Frequency:</div>
            <div>Overall Musical Note:</div>
          </ResultLabels>
          <ResultBox>
            <ResultTable>
              <colgroup>
                <Col $width={63} />
                <Col $width={63} />
                <col />
              </colgroup>
              <thead>
                <tr>
                  <th>Channel 1</th>
                  <th>Average</th>
                  <th aria-label="Empty" />
                </tr>
              </thead>
              <tbody>
                <tr><td colSpan={3} /></tr>
                <tr><td colSpan={3}>452.47 Hz</td></tr>
                <tr><td colSpan={3}>A4 +48 cents</td></tr>
              </tbody>
            </ResultTable>
          </ResultBox>
        </Results>
      </FrequencyBody>
    </WindowFrame>
  </FloatingWindow>
);

const AmplitudeStatistics = () => (
  <FloatingWindow $left={499} $top={303} $width={456}>
    <WindowBar $active>
      <Lights $left={5}>
        <Light $color="#fc5b57" $edge="#e2463f" />
        <Light $color="#fdbc2f" $edge="#dfa023" />
        <Light $color="#34c83f" $edge="#27aa35" />
      </Lights>
    </WindowBar>
    <WindowFrame $focus>
      <Header $focus>
        <Tab $focus>
          <Grip />
          Amplitude Statistics
          <Close aria-label="Close">×</Close>
        </Tab>
        <Spacer />
        <PanelMenu />
      </Header>
      <StatsBody>
        <StatsTabs>
          <StatsTab $width={52}>General</StatsTab>
          <StatsTab $width={85} $active>RMS Histogram</StatsTab>
          <StatsTab $width={73}>RMS Settings</StatsTab>
        </StatsTabs>
        <StatsPane>
          <ChartFrame $top={0}>
            <HistogramChart />
          </ChartFrame>
          <Row $top={9}>
            <Label htmlFor="show-channel">Show Channel:</Label>
            <Select id="show-channel" width={69} options={['Channel 1', 'Average']} />
          </Row>
        </StatsPane>
        <PushButton $width={74}>Scan Selection</PushButton>
      </StatsBody>
    </WindowFrame>
  </FloatingWindow>
);

const App = () => (
  <>
    <GlobalStyle />
    <Desktop>
      <TitleBar>
        <Lights $left={3}>
          <Light />
          <Light />
          <Light />
        </Lights>
        Adobe Audition
      </TitleBar>
      <Toolbar>
        <ToolButton as="span" $width={8}>
          <Grip />
        </ToolButton>
        <ModeButton $width={73} $active>
          <WaveModeIcon />
          Waveform
        </ModeButton>
        <ModeButton $width={75}>
          <MultiModeIcon />
          Multitrack
        </ModeButton>
        <Slant width="26" height="18" viewBox="0 0 26 18">
          <path d="M0 18Q14 14 20 0h6v18z" fill="#383838" />
        </Slant>
        <ToolButton $pressed aria-label="Spectral frequency"><SpectralIcon /></ToolButton>
        <ToolButton $width={21} aria-label="Spectral pitch"><PitchIcon /></ToolButton>
        <Divider />
        <ToolButton $width={20} $dim aria-label="Move"><MoveIcon /></ToolButton>
        <ToolButton $width={20} $dim aria-label="Razor"><RazorIcon /></ToolButton>
        <ToolButton $width={22} $dim aria-label="Slip"><SlipIcon /></ToolButton>
        <ToolButton $width={21} aria-label="Time selection"><BeamIcon /></ToolButton>
        <ToolButton $width={19} $pressed aria-label="Marquee selection"><MarqueeIcon /></ToolButton>
        <ToolButton $width={22} aria-label="Lasso"><LassoIcon /></ToolButton>
        <ToolButton $width={21} aria-label="Paintbrush"><BrushIcon /></ToolButton>
        <ToolButton $width={21} aria-label="Spot healing"><HealIcon /></ToolButton>
        <Spacer />
        <Row>
          <Label htmlFor="workspace">Workspace:</Label>
          <Select id="workspace" width={107} options={['Default', 'Classic', 'Mastering']} />
        </Row>
        <SearchBox>
          <SearchIcon />
          <SearchInput type="search" placeholder="Search Help" aria-label="Search Help" />
        </SearchBox>
      </Toolbar>

      <Workbench>
        <Column $gap={7}>
          <Panel $height={337}>
            <Header>
              <Tab>
                <Grip />
                Files
                <Close aria-label="Close">×</Close>
              </Tab>
              <Spacer />
              <PanelMenu />
            </Header>
            <FileTools>
              <FileIconButton aria-label="Open"><FolderIcon /></FileIconButton>
              <FileIconButton aria-label="Import"><ImportIcon /></FileIconButton>
              <FileIconButton aria-label="New"><NewFileIcon /></FileIconButton>
              <FileIconButton aria-label="Insert"><InsertIcon /></FileIconButton>
              <FileIconButton aria-label="Delete"><TrashIcon /></FileIconButton>
            </FileTools>
            <FileList>
              <FileTable>
                <thead>
                  <tr><th>Name</th></tr>
                </thead>
                <tbody>
                  <tr>
                    <td>
                      <FileName>
                        <WaveGlyph />
                        1988_1 *
                      </FileName>
                    </td>
                  </tr>
                </tbody>
              </FileTable>
              <Scrollbar margin="auto 0 0" />
            </FileList>
          </Panel>
          <Panel>
            <Header>
              <Tab>
                <Grip />
                Properties
                <Close aria-label="Close">×</Close>
              </Tab>
              <Spacer />
              <PanelMenu />
            </Header>
            <PropertyBar $height={24}>
              <WaveGlyph />
            </PropertyBar>
            <PropertyBar $height={16}>
              <Arrow dir="down" />
            </PropertyBar>
            <PropertyBox>Sample Rate:</PropertyBox>
            <PropertyBar $height={20}>
              <Arrow dir="right" />
            </PropertyBar>
            <Scrollbar margin="auto 0 2px" />
          </Panel>
          <Panel $height={130} $pull={-4}>
            <Header>
              <Tab>
                <Grip />
                Video
                <Close aria-label="Close">×</Close>
              </Tab>
              <Spacer />
              <PanelMenu />
            </Header>
          </Panel>
        </Column>

        <Column $gap={4}>
          <Panel>
            <Header>
              <EditorTab>
                <Grip />
                <Select
                  id="document"
                  label="Open document"
                  width={93}
                  options={['Editor: 1988_1 *']}
                />
                <Close aria-label="Close">×</Close>
              </EditorTab>
              <Spacer />
              <PanelMenu />
            </Header>
            <EditorBody>
              <Overview>
                <OverviewWave />
              </Overview>
              <Cell $col={2} $row={1} $indent={10}>
                <ZoomButton $dim aria-label="Zoom out full">
                  {icon(15, 14, ZOOMS[4][1])}
                </ZoomButton>
              </Cell>
              <Cell $col={1} $row={3}>
                <TimeRuler />
              </Cell>
              <Cell $col={2} $row={3} $indent={6}>
                <SnapButton aria-label="Snapping"><MagnetIcon /></SnapButton>
              </Cell>
              <Cell $col={1} $row={4} $bg="#000">
                <TrackWave />
              </Cell>
              <Cell $col={2} $row={4}>
                <SideScale lines={DB_LINES} height={302} unit="dB" />
              </Cell>
              <Splitter>
                <Arrow dir="down" />
              </Splitter>
              <Cell $col={1} $row={6} $bg="#000">
                <Spectrogram />
              </Cell>
              <Cell $col={2} $row={6}>
                <SideScale lines={HZ_LINES} height={303} />
              </Cell>
            </EditorBody>
            <Transport>
              <TimeCode>0:05.467</TimeCode>
              <TransportButtons>
                {TRANSPORT.map(([name, shape, dim]) => (
                  <TransportButton key={name} aria-label={name} $dim={dim}>
                    {icon(11, 9, shape)}
                  </TransportButton>
                ))}
              </TransportButtons>
              <ZoomButtons>
                {ZOOMS.map(([name, shape, dim]) => (
                  <ZoomButton key={name} aria-label={name} $dim={dim}>
                    {icon(15, 13, shape)}
                  </ZoomButton>
                ))}
              </ZoomButtons>
            </Transport>
          </Panel>
          <Panel $height={54}>
            <Header>
              <Tab $idle $width={82}>Selection/View</Tab>
              <Tab>
                <Grip />
                Phase Meter
                <Close aria-label="Close">×</Close>
              </Tab>
              <Spacer />
              <PanelMenu />
            </Header>
            <PhaseBody>
              <PhaseScale />
            </PhaseBody>
          </Panel>
        </Column>
      </Workbench>

      <StatusBar>
        <StatusText>Analyze Statistics completed in 3.93 seconds</StatusText>
        <StatusCell $width={40} />
        <StatusCell $width={88} />
        <StatusCell $width={172} $left>192000 Hz ● 32-bit (float) ● Mono</StatusCell>
        <StatusCell $width={56}>165.56 MB</StatusCell>
        <StatusCell $width={58}>3:46.039</StatusCell>
        <StatusCell $width={70}>47.53 GB free</StatusCell>
        <StatusCell $width={43} />
      </StatusBar>

      <FrequencyAnalysis />
      <AmplitudeStatistics />
    </Desktop>
  </>
);

export default App;
